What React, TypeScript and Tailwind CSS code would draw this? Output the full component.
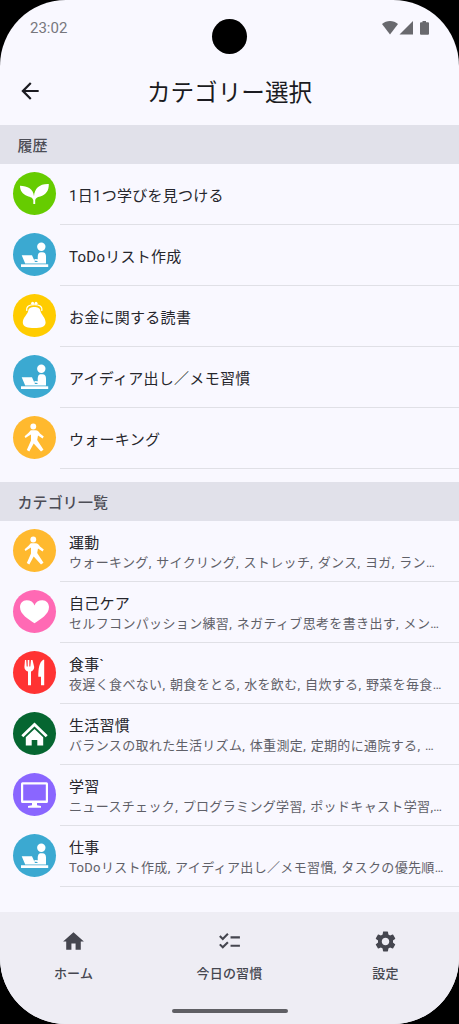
import type { ReactNode } from "react";
import { MdArrowBack, MdChecklist, MdHome, MdSettings } from "react-icons/md";

type IconName = "sprout" | "desk" | "purse" | "walk" | "heart" | "meal" | "house" | "monitor";

const ICON_COLORS: Record<IconName, string> = {
  sprout: "bg-[#66cc00]",
  desk: "bg-[#3ba9d1]",
  purse: "bg-[#ffcc00]",
  walk: "bg-[#ffb92e]",
  heart: "bg-[#ff69b4]",
  meal: "bg-[#ff3333]",
  house: "bg-[#066631]",
  monitor: "bg-[#8a66ff]",
};

const ICON_SHAPES: Record<IconName, ReactNode> = {
  sprout: (
    <path d="M20.3 32V28.3C19.8 25.5 17.5 25 14.3 23.9C9.5 22.2 7 18.5 7 13.7C14.5 13.8 20.4 17 21 24.2C21.5 16.5 26.5 11.6 35.8 12C36 18.5 33 23 27.2 24.4C24 25.2 22.3 26 22.2 28.3V32Z" />
  ),
  desk: (
    <>
      <circle cx="28.3" cy="13.8" r="4.2" />
      <path d="M8.7 22.3H19L22 29H24.5V28L21.3 27.4L21.6 26L24.8 26.3C24.5 22 25 19.3 28 19.3H29.5C32 19.3 33 21 33 23.5V30.4H12.2Z" />
      <path d="M8 31.3H35.2V34H8Z" />
    </>
  ),
  purse: (
    <>
      <path d="M13.8 17C12.8 12 16.5 10.8 21.3 10.8S29.8 12 28.8 17" fill="none" stroke="white" strokeWidth="1.1" />
      <circle cx="19.6" cy="9.3" r="1.5" />
      <circle cx="23" cy="9.3" r="1.5" />
      <path d="M15.2 17C15.2 11.5 27.4 11.5 27.4 17C28 20.5 32.6 23.5 32.6 28.5C32.6 33 27.5 34 21.3 34S9.8 33 9.8 28.5C9.8 23.5 14.6 20.5 15.2 17Z" />
    </>
  ),
  walk: (
    <>
      <circle cx="20.3" cy="10.5" r="2.9" />
      <path d="M17.8 14.2H22.5C24.8 14.2 25.9 15.5 27 17.4L30.8 20.6L29.6 22.6L25 19.5L24.2 24L30.5 33.8L28 35.4L20.7 27.5L16.3 35.4L13.8 34L18 24.5V18.5L15.5 20L12.5 22L11.6 20.2L15.3 17Z" />
    </>
  ),
  heart: (
    <path d="M21.5 33.2C15.5 29.2 7 24.5 7 17C7 13.2 9.7 10.2 13.5 10.2C17.5 10.2 20.5 12 21.5 15.4C22.5 12 25.5 10.2 29.5 10.2C33.3 10.2 36 13.2 36 17C36 24.5 27.5 29.2 21.5 33.2Z" />
  ),
  meal: (
    <>
      <path d="M12 9H13.2L13.7 15.5H14.7V9H16.3V15.5H17.3L18 9H19.5L21.2 16C21.2 18.6 19.5 20.2 18 20.6V34.2H15V20.6C13.2 20.2 11.4 18.6 11.4 16Z" />
      <path d="M30.2 8.8H31.2V34.2H28V25.8H25.3C25.3 18 26.2 11.3 30.2 8.8Z" />
    </>
  ),
  house: (
    <>
      <path d="M9.3 24.3L21.5 12.5L33.7 24.3" fill="none" stroke="white" strokeWidth="2.8" />
      <path d="M21.5 16.9L30.2 25.2V33.5H24.3V28H18.7V33.5H12.8V25.2Z" />
    </>
  ),
  monitor: (
    <>
      <path d="M9.5 9.2H33.5A1.5 1.5 0 0 1 35 10.7V28.5A1.5 1.5 0 0 1 33.5 30H9.5A1.5 1.5 0 0 1 8 28.5V10.7A1.5 1.5 0 0 1 9.5 9.2ZM10.2 11.4V27.4H32.8V11.4Z" fillRule="evenodd" />
      <path d="M19 29.8H24V32.3L28 33V34.7H15V33L19 32.3Z" />
    </>
  ),
};

const history: { icon: IconName; title: string }[] = [
  { icon: "sprout", title: "1日1つ学びを見つける" },
  { icon: "desk", title: "ToDoリスト作成" },
  { icon: "purse", title: "お金に関する読書" },
  { icon: "desk", title: "アイディア出し／メモ習慣" },
  { icon: "walk", title: "ウォーキング" },
];

const categories: { icon: IconName; title: string; habits: string }[] = [
  { icon: "walk", title: "運動", habits: "ウォーキング, サイクリング, ストレッチ, ダンス, ヨガ, ラン…" },
  { icon: "heart", title: "自己ケア", habits: "セルフコンパッション練習, ネガティブ思考を書き出す, メン…" },
  { icon: "meal", title: "食事`", habits: "夜遅く食べない, 朝食をとる, 水を飲む, 自炊する, 野菜を毎食…" },
  { icon: "house", title: "生活習慣", habits: "バランスの取れた生活リズム, 体重測定, 定期的に通院する, …" },
  { icon: "monitor", title: "学習", habits: "ニュースチェック, プログラミング学習, ポッドキャスト学習,…" },
  { icon: "desk", title: "仕事", habits: "ToDoリスト作成, アイディア出し／メモ習慣, タスクの優先順…" },
];

function SectionHeader({ children }: { children: ReactNode }) {
  return (
    <h2 className="flex h-[39px] shrink-0 items-center bg-[#e1e1ea] pl-[17.5px] pt-[3px] text-[15px] font-medium leading-none tracking-[0.1px] text-[#4c4d56]">
      {children}
    </h2>
  );
}

function Row({ icon, title, habits }: { icon: IconName; title: string; habits?: string }) {
  return (
    <li className="flex h-[61px] items-stretch pl-[13px]">
      <div className={`mt-2 size-[43px] shrink-0 rounded-full ${ICON_COLORS[icon]}`}>
        <svg viewBox="0 0 43 43" className="size-full fill-white">{ICON_SHAPES[icon]}</svg>
      </div>
      <div className="ml-1 flex min-w-0 flex-1 flex-col justify-center border-b border-[#e0e0e6] pl-[9px] pt-[3px] whitespace-nowrap">
        <p className="text-[15px] leading-5 tracking-[0.27px] text-[#26262c]">{title}</p>
        {habits && (
          <p className="text-[13px] leading-5 tracking-[0.35px] text-[#5f6068] [word-spacing:1px]">{habits}</p>
        )}
      </div>
    </li>
  );
}

function NavItem({ icon, label }: { icon: ReactNode; label: string }) {
  return (
    <button className="flex w-[156px] shrink-0 flex-col items-center pt-[17px] text-[#45464f]">
      {icon}
      <span className="mt-[10px] text-[13px] font-medium leading-5 tracking-[0.2px]">{label}</span>
    </button>
  );
}

export default function App() {
  return (
    <div className="h-[1024px] w-[459px] overflow-hidden bg-black">
      <div className="flex h-full flex-col overflow-hidden rounded-[66px] bg-[#f9f8ff] font-['Roboto','Noto_Sans_CJK_JP',sans-serif]">
        <header className="flex h-[125px] shrink-0 flex-col">
          <div className="grid h-[57px] grid-cols-3 items-start">
            <span className="pl-[30px] pt-[19px] text-[15px] leading-[18px] text-[#77777d]">23:02</span>
            <span className="mt-[19px] size-[35px] justify-self-center rounded-full bg-black" />
            <svg viewBox="0 0 48 14" className="mr-[29px] mt-[21px] h-[14px] w-[48px] justify-self-end fill-[#69696e]">
              <path d="M0 3C4.5-1 11.5-1 16 3L8 13.5Z" />
              <path d="M31 0V13.5H17.5Z" />
              <path d="M40.5 0H44V1.3H46A1 1 0 0 1 47 2.3V12.7A1 1 0 0 1 46 13.7H39A1 1 0 0 1 38 12.7V2.3A1 1 0 0 1 39 1.3H40.5Z" />
            </svg>
          </div>
          <div className="grid flex-1 grid-cols-[60px_1fr_60px] items-center">
            <MdArrowBack className="ml-[17px] size-[26px] text-[#1b1b21]" />
            <h1 className="pt-[3px] text-center text-[23.6px] leading-8 text-[#1b1b21]">カテゴリー選択</h1>
          </div>
        </header>

        <main className="flex-1">
          <SectionHeader>履歴</SectionHeader>
          <ul>
            {history.map((item, idx) => (
              <Row key={idx} {...item} />
            ))}
          </ul>
          <div className="mt-[13px]">
            <SectionHeader>カテゴリ一覧</SectionHeader>
          </div>
          <ul>
            {categories.map((item) => (
              <Row key={item.title} {...item} />
            ))}
          </ul>
        </main>

        <nav className="flex h-[112px] shrink-0 flex-col items-center bg-[#eeedf4]">
          <div className="flex w-full flex-1 justify-center">
            <NavItem icon={<MdHome className="size-[25px]" />} label="ホーム" />
            <NavItem icon={<MdChecklist className="size-[25px]" />} label="今日の習慣" />
            <NavItem icon={<MdSettings className="size-[25px]" />} label="設定" />
          </div>
          <div className="mb-[11px] h-1 w-[116px] rounded-full bg-[#5f5f64]" />
        </nav>
      </div>
    </div>
  );
}
